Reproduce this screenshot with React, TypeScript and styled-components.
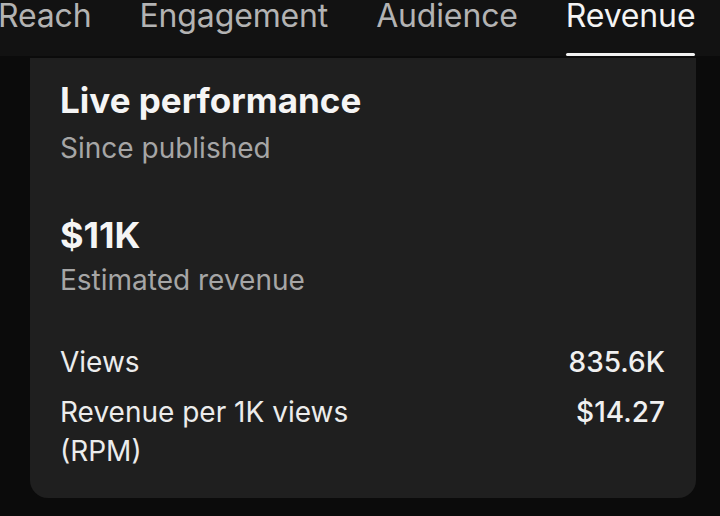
import React from "react";
import styled, { createGlobalStyle } from "styled-components";

const GlobalStyle = createGlobalStyle`
  html, body {
    margin: 0;
    padding: 0;
    background: #0b0b0b;
  }
  body {
    font-family: Inter, "Noto Sans", sans-serif;
    -webkit-font-smoothing: antialiased;
  }
`;

const Page = styled.div`
  width: 720px;
  height: 516px;
  overflow: hidden;
  background: #0b0b0b;
  display: flex;
  flex-direction: column;
`;

const TabBar = styled.div`
  height: 56px;
  flex-shrink: 0;
  background: #121212;
  display: flex;
  gap: 48px;
  margin-left: -2px;
  overflow: hidden;
`;

const Tab = styled.div<{ $active?: boolean }>`
  position: relative;
  font-size: 32px;
  letter-spacing: -0.15px;
  line-height: 36px;
  color: ${(p) => (p.$active ? "#f4f4f4" : "#b3b3b3")};
  height: 56px;
  box-sizing: border-box;
  white-space: nowrap;

  span {
    display: block;
    margin-top: -2px;
  }

  &::after {
    content: "";
    display: ${(p) => (p.$active ? "block" : "none")};
    position: absolute;
    left: 0;
    right: 0;
    bottom: 0;
    height: 3px;
    border-radius: 2px;
    background: #f2f2f2;
  }
`;

const Body = styled.div`
  flex: 1;
  padding: 2px 24px 18px 30px;
  display: flex;
`;

const Card = styled.div`
  flex: 1;
  background: #1f1f1f;
  border-radius: 0 0 18px 18px;
  padding: 22px 31px 0 30px;
  display: flex;
  flex-direction: column;
`;

const Title = styled.div`
  font-size: 35px;
  font-weight: 700;
  color: #f5f5f5;
  line-height: 40px;
`;

const Subtle = styled.div<{ $gap: number }>`
  font-size: 28px;
  color: #a6a6a6;
  line-height: 34px;
  margin-top: ${(p) => p.$gap}px;
`;

const Amount = styled.div`
  font-size: 36px;
  font-weight: 700;
  color: #f5f5f5;
  line-height: 40px;
  margin-top: 50px;
`;

const Rows = styled.div`
  margin-top: 46px;
  display: flex;
  flex-direction: column;
  gap: 11px;
`;

const Row = styled.div`
  display: flex;
  justify-content: space-between;
  align-items: flex-start;
  font-size: 28px;
  line-height: 39px;
  color: #ececec;
`;

const Label = styled.div`
  max-width: 340px;
`;

const Value = styled.div`
  font-weight: 500;
  color: #f0f0f0;
`;

const tabs = ["Reach", "Engagement", "Audience", "Revenue"];

export default function App() {
  return (
    <>
      <GlobalStyle />
      <Page>
        <TabBar>
          {tabs.map((t) => (
            <Tab key={t} $active={t === "Revenue"}>
              <span>{t}</span>
            </Tab>
          ))}
        </TabBar>
        <Body>
          <Card>
            <Title>Live performance</Title>
            <Subtle $gap={11}>Since published</Subtle>
            <Amount>$11K</Amount>
            <Subtle $gap={8}>Estimated revenue</Subtle>
            <Rows>
              <Row>
                <Label>Views</Label>
                <Value>835.6K</Value>
              </Row>
              <Row>
                <Label>Revenue per 1K views (RPM)</Label>
                <Value>$14.27</Value>
              </Row>
            </Rows>
          </Card>
        </Body>
      </Page>
    </>
  );
}
